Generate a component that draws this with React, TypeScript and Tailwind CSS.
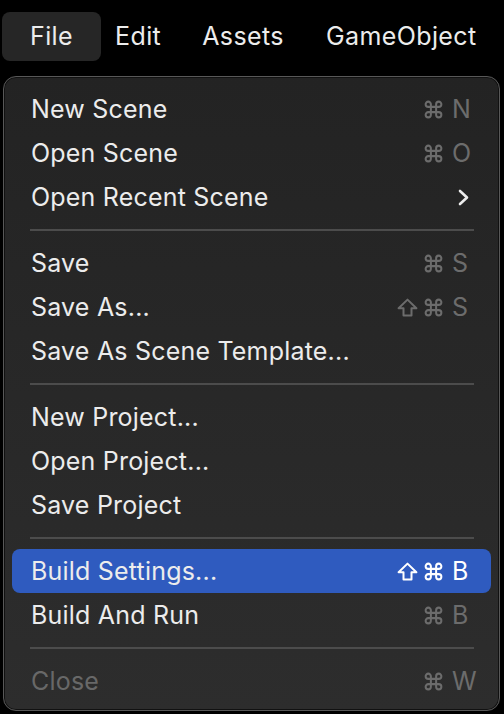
import { Command } from "lucide-react";

type Item = {
  label: string;
  key?: string;
  shift?: boolean;
  submenu?: boolean;
  active?: boolean;
  disabled?: boolean;
};

const groups: Item[][] = [
  [
    { label: "New Scene", key: "N" },
    { label: "Open Scene", key: "O" },
    { label: "Open Recent Scene", submenu: true },
  ],
  [
    { label: "Save", key: "S" },
    { label: "Save As...", key: "S", shift: true },
    { label: "Save As Scene Template..." },
  ],
  [{ label: "New Project..." }, { label: "Open Project..." }, { label: "Save Project" }],
  [
    { label: "Build Settings...", key: "B", shift: true, active: true },
    { label: "Build And Run", key: "B" },
  ],
  [{ label: "Close", key: "W", disabled: true }],
];

function ShiftIcon() {
  return (
    <svg width="21" height="19" viewBox="0 0 21 19" fill="none" className="mr-[5px]">
      <path
        d="M10.5 1.6 L19.4 10.2 H14.5 V17.4 H6.5 V10.2 H1.6 Z"
        stroke="currentColor"
        strokeWidth="2"
        strokeLinejoin="round"
      />
    </svg>
  );
}

function Chevron() {
  return (
    <svg width="11" height="17" viewBox="0 0 11 17" fill="none" className="mr-[22px]">
      <path d="M2 2 L9 8.5 L2 15" stroke="currentColor" strokeWidth="2.6" strokeLinecap="round" strokeLinejoin="round" />
    </svg>
  );
}

function MenuRow({ item }: { item: Item }) {
  const keyColor = item.active ? "text-white" : "text-[#6c6c6c]";
  return (
    <div
      className={`mx-2 flex h-[44px] items-center rounded-lg pl-[19px] ${
        item.active ? "bg-[#2f5bbf]" : ""
      }`}
    >
      <span className={`flex-1 ${item.disabled ? "text-[#686868]" : "text-[#ececec]"}`}>{item.label}</span>
      {item.submenu && (
        <span className="text-[#ececec]">
          <Chevron />
        </span>
      )}
      {item.key && (
        <div className={`flex items-center pr-[17px] ${keyColor}`}>
          {item.shift && <ShiftIcon />}
          <Command size={21} strokeWidth={2.3} />
          <span className="ml-[8px] w-[22px]">{item.key}</span>
        </div>
      )}
    </div>
  );
}

export default function App() {
  return (
    <div
      className="h-[714px] w-full overflow-hidden bg-black text-[25px] leading-none tracking-[0.2px]"
      style={{ fontFamily: "Inter, 'Noto Sans', sans-serif" }}
    >
      <div className="flex items-center pt-3 tracking-[0.4px] text-[#ececec]">
        <div className="ml-[2px] flex h-[49px] w-[99px] items-center justify-center rounded-lg bg-[#262626]">
          File
        </div>
        <span className="ml-[14px]">Edit</span>
        <span className="ml-[41px]">Assets</span>
        <span className="ml-[42px]">GameObject</span>
      </div>

      <div className="ml-[3px] mt-[15px] w-[497px] rounded-[13px] border border-[#585858] bg-gradient-to-b from-[#232323] to-[#2d2d2d] pb-[7px] pt-[10px] shadow-[inset_0_0_0_1px_#111]">
        {groups.map((group, gi) => (
          <div key={gi}>
            {gi > 0 && (
              <div className="flex h-[22px] items-center pl-[26px] pr-[25px]">
                <div className="h-[2px] w-full bg-[#4c4c4c]" />
              </div>
            )}
            {group.map((item) => (
              <MenuRow key={item.label} item={item} />
            ))}
          </div>
        ))}
      </div>
    </div>
  );
}
